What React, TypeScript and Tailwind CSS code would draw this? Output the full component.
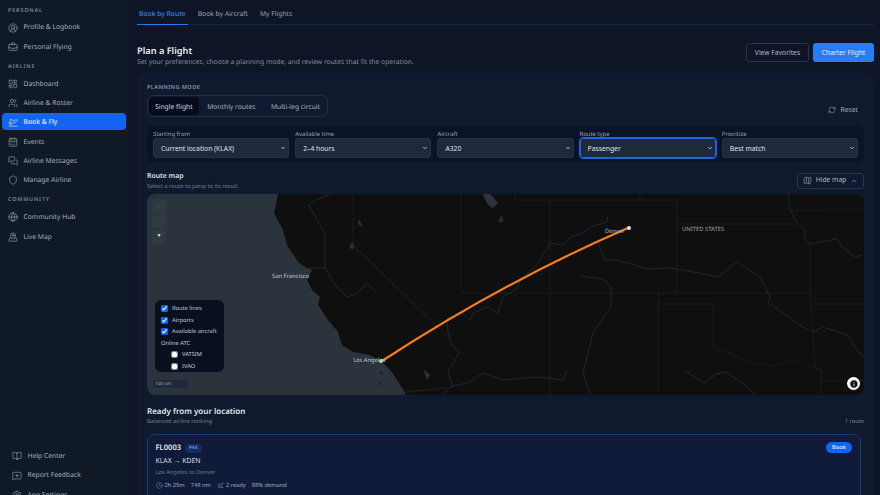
import React from "react";
import {
  CircleUserRound, BriefcaseBusiness, LayoutDashboard, Users, PlaneTakeoff, CalendarDays, MessagesSquare, Shield,
  Globe, MapPinned, BookOpen, MessageSquarePlus, Settings, RefreshCw, Map as MapIcon, ChevronUp, ChevronDown, Clock, Plane, Plus, Minus, Info,
} from "lucide-react";

const Item = ({ icon: I, label, active }: { icon: any; label: string; active?: boolean }) => (
  <div className={`flex items-center gap-[5.5px] h-[17.5px] pl-[6px] pt-[1.5px] rounded-[4px] text-[6.75px] whitespace-nowrap ${active ? "bg-[#1463f3] text-[#e8f0ff] font-medium" : "text-[#a4afbc]"}`}>
    <I size={10} strokeWidth={1.4} />
    <span>{label}</span>
  </div>
);

const Section = ({ children }: { children: string }) => (
  <div className="pl-[8px] text-[5.4px] tracking-[0.16em] text-[#7d8897] font-semibold leading-[8px] uppercase">{children}</div>
);

const Field = ({ label, value, focus }: { label: string; value: string; focus?: boolean }) => (
  <label className="flex-1 min-w-0 flex flex-col">
    <span className="text-[5.9px] leading-[8px] text-[#97a3b3]">{label}</span>
    <span className="relative block">
      <select
        defaultValue={value}
        className={`appearance-none block w-full h-[20px] rounded-[3px] bg-[#1e2a3b] border text-[6.75px] pl-[7px] pt-[1.5px] text-[#dfe5ec] ${focus ? "border-[#1c64d8] outline outline-1 outline-[#1c64d8]" : "border-[#263346]"}`}
      >
        <option>{value}</option>
      </select>
      <ChevronDown size={6} strokeWidth={3} className="absolute right-[3px] top-[7px] text-[#dfe5ec] pointer-events-none" />
    </span>
  </label>
);

const river = "M308 205L310 207L318 222L325 233L325 268L308 268M325 268L335 285L347 297L357 293L367 283L375 292M308 205L316 200L333 193M447 318L463 313L470 320L473 313L487 307L498 313L503 297L518 288L520 280L537 265L550 243L563 245L570 237L583 233L590 227L607 222L608 215M447 318L448 333L452 345L459 353L448 372L452 385L443 395M450 387L470 382L483 373L503 380L537 377L563 380L567 370M598 243L605 260L617 260L648 269L670 268L693 272L718 277L737 262L760 277L770 297L768 303L783 313L803 327L813 332L823 327L847 335L857 350L863 356M580 276L603 279L611 287L611 307L593 333L583 373L590 394M788 193L790 210L797 223L805 230L804 237L810 244L837 239L842 247L855 257L863 255M684 370L704 383L716 374L726 372L745 385L755 395";
const border = "M353 193L353 245M461 193L461 293L811 293M550 200L550 395M515 193L515 200L677 200L677 293M677 224L797 224M790 211L863 209M810 244L810 293L813 330L815 368M659 293L658 304L658 393M658 304L713 304L713 347L726 352L735 356L752 363L765 365L775 366L785 362L800 362L812 368L821 369L821 393M821 381L863 381M812 304L863 304M640 193L640 200";

const MapLabel = ({ className, children }: { className: string; children: string }) => (
  <span className={`absolute text-[5.8px] leading-[8px] whitespace-nowrap ${className}`}>{children}</span>
);

const Check = ({ label, on, className = "" }: { label: string; on?: boolean; className?: string }) => (
  <label className={`flex items-center gap-[4px] h-[11.5px] whitespace-nowrap ${className}`}>
    <input type="checkbox" defaultChecked={on} className="w-[7px] h-[7px] m-0 accent-[#0b63f0]" />
    <span>{label}</span>
  </label>
);

export default function App() {
  return (
    <div className="flex h-[495px] w-[880px] overflow-hidden bg-[#0d1526] text-white [text-rendering:geometricPrecision]" style={{ fontFamily: '"Noto Sans", sans-serif' }}>
      <aside className="w-[128px] shrink-0 h-full bg-[#0f1a26] flex flex-col pt-[6px] overflow-hidden">
        <Section>Personal</Section>
        <div className="flex flex-col gap-[1.8px] px-[2px] mt-[4px]">
          <Item icon={CircleUserRound} label="Profile & Logbook" />
          <Item icon={BriefcaseBusiness} label="Personal Flying" />
        </div>
        <div className="mt-[7.5px]"><Section>Airline</Section></div>
        <div className="flex flex-col gap-[1.8px] px-[2px] mt-[4px]">
          <Item icon={LayoutDashboard} label="Dashboard" />
          <Item icon={Users} label="Airline & Roster" />
          <Item icon={PlaneTakeoff} label="Book & Fly" active />
          <Item icon={CalendarDays} label="Events" />
          <Item icon={MessagesSquare} label="Airline Messages" />
          <Item icon={Shield} label="Manage Airline" />
        </div>
        <div className="mt-[7px]"><Section>Community</Section></div>
        <div className="flex flex-col gap-[2px] px-[2px] mt-[4.5px]">
          <Item icon={Globe} label="Community Hub" />
          <Item icon={MapPinned} label="Live Map" />
        </div>
        <div className="mt-auto flex flex-col gap-[2px] pl-[6px] pr-[2px] translate-y-[8px]">
          <Item icon={BookOpen} label="Help Center" />
          <Item icon={MessageSquarePlus} label="Report Feedback" />
          <Item icon={Settings} label="App Settings" />
        </div>
      </aside>

      <main className="flex-1 min-w-0 h-full overflow-hidden pl-[9px] pr-[6px]">
        <nav className="flex gap-[8px] h-[25px] border-b border-[#18243a] text-[6.75px] text-[#9aa5b4]">
          <span className="h-[25px] pt-[5px] flex items-center border-b border-[#2b78e0] text-[#3b86e6] font-medium px-[2px]">Book by Route</span>
          <span className="flex items-center pt-[5px] px-[2px]">Book by Aircraft</span>
          <span className="flex items-center pt-[5px] px-[2px]">My Flights</span>
        </nav>

        <header className="flex items-start justify-between pt-[18px] h-[48px]">
          <div className="pt-[1.5px]">
            <h1 className="text-[9.2px] leading-[12px] font-semibold text-[#e9edf2]">Plan a Flight</h1>
            <p className="text-[6.75px] leading-[10px] text-[#8490a0]">Set your preferences, choose a planning mode, and review routes that fit the operation.</p>
          </div>
          <div className="flex gap-[4px] text-[6.75px]">
            <button className="w-[63px] h-[19px] pt-[1.5px] rounded-[3px] border border-[#27344a] text-[#aeb8c5]">View Favorites</button>
            <button className="w-[61px] h-[19px] pt-[1.5px] rounded-[3px] bg-[#2a7cf6] text-[#e6f0ff]">Charter Flight</button>
          </div>
        </header>

        <section className="rounded-t-[8px] bg-[#0f1a2e] px-[10px] pt-[10px] h-[430px]">
          <div className="text-[5.7px] leading-[9px] font-semibold tracking-[0.06em] text-[#8994a3]">PLANNING MODE</div>
          <div className="flex items-end justify-between mt-[3px]">
            <div className="flex items-center gap-[1.5px] h-[22px] w-[180.5px] rounded-[6px] border border-[#212e43] px-[1px] text-[6.75px] text-[#aab4c2] whitespace-nowrap">
              <span className="h-[18px] pt-[1.5px] flex items-center px-[6px] rounded-[4px] bg-[#050b1c] text-[#d4dbe5]">Single flight</span>
              <span className="pt-[1.5px] px-[7px]">Monthly routes</span>
              <span className="pt-[1.5px] px-[7px]">Multi-leg circuit</span>
            </div>
            <div className="flex items-center gap-[5px] text-[6.75px] text-[#a8b2bf] pr-[6px] pb-[2px]">
              <RefreshCw size={8} strokeWidth={1.4} />
              <span>Reset</span>
            </div>
          </div>

          <div className="flex gap-[6px] mt-[8px] h-[38px] rounded-[6px] bg-[#0a1328] px-[6px] pt-[5px]">
            <Field label="Starting from" value="Current location (KLAX)" />
            <Field label="Available time" value="2–4 hours" />
            <Field label="Aircraft" value="A320" />
            <Field label="Route type" value="Passenger" focus />
            <Field label="Prioritize" value="Best match" />
          </div>

          <div className="flex items-center justify-between mt-[9px] h-[17px]">
            <div>
              <div className="text-[6.875px] leading-[10px] font-semibold text-[#dbe1e9] pt-[1px]">Route map</div>
              <div className="text-[5.73px] leading-[8px] text-[#77828f]">Select a route to jump to its result.</div>
            </div>
            <button className="w-[67px] h-[16px] rounded-[3px] border border-[#27344a] flex items-center justify-center gap-[4px] text-[6.75px] text-[#aeb8c5]">
              <MapIcon size={9} strokeWidth={1.4} />
              <span>Hide map</span>
              <ChevronUp size={8} strokeWidth={1.6} />
            </button>
          </div>

          <div className="relative mt-[5px] h-[201px] rounded-[8px] overflow-hidden bg-[#0f0f10]">
            <svg viewBox="147 194 717 201" className="absolute inset-0 w-full h-full">
              <path d="M147 194L278 194L274 213L283 230L287 245L298 262L307 268L312 270L307 280L312 290L320 297L318 305L328 320L338 332L342 345L353 352L370 355L382 362L392 372L398 382L405 392L405 395L147 395Z" fill="#2b343c" />
              <path d={river} fill="none" stroke="#222e36" strokeWidth="0.8" />
              <path d={border} fill="none" stroke="#353739" strokeWidth="0.6" strokeDasharray="1 1" />
              <path d="M353 245L448 337M405 392L447 388" fill="none" stroke="#353739" strokeWidth="0.5" />
              <path d="M483 194L490 194L498 203L492 208L487 203Z M359 220L362 226L358 224Z M351 243L354 245L353 249L350 248Z M501 216L503 221L499 222Z M424 370L430 375L427 379Z" fill="#2b343c" stroke="#2b343c" strokeWidth="0.6" />
              <path d="M352 361L355 361M380 372L383 374M379 382L382 385" stroke="#0f0f10" strokeWidth="1" />
              <path d="M382 361Q505 281 628 228" fill="none" stroke="#f67d1c" strokeWidth="2.2" strokeLinecap="round" />
              <circle cx="381" cy="361" r="2" fill="#7df08d" />
              <circle cx="629" cy="228" r="2" fill="#dbe6fa" />
            </svg>

            <MapLabel className="left-[125px] top-[78px] text-[#c9ced3]">San Francisco</MapLabel>
            <MapLabel className="left-[206px] top-[162px] text-[#c9ced3]">Los Angeles</MapLabel>
            <MapLabel className="left-[458px] top-[33px] text-[#aeb5bf]">Denver</MapLabel>
            <MapLabel className="left-[535px] top-[31px] text-[#8b9098] font-medium">UNITED STATES</MapLabel>

            <div className="absolute left-[5px] top-[5px] flex flex-col gap-[1px] text-[#3d4852]">
              <div className="w-[14px] h-[14px] rounded-[2px] bg-[#2f3a42] flex items-center justify-center"><Plus size={7} /></div>
              <div className="w-[14px] h-[14px] rounded-[2px] bg-[#2f3a42] flex items-center justify-center"><Minus size={7} /></div>
              <div className="w-[14px] h-[14px] mt-[1px] rounded-[2px] bg-[#2f3a42] flex items-center justify-center text-[#e6e9ec] text-[5px]">▼</div>
            </div>

            <div className="absolute left-[8px] top-[106px] w-[69px] h-[72px] rounded-[6px] bg-[#081020] px-[6px] pt-[3px] text-[5.73px] text-[#c3cbd6]">
              <Check label="Route lines" on />
              <Check label="Airports" on />
              <Check label="Available aircraft" on />
              <div className="h-[11.5px] flex items-center">Online ATC</div>
              <Check label="VATSIM" className="pl-[10px]" />
              <Check label="IVAO" className="pl-[10px] h-[10px]" />
            </div>

            <div className="absolute left-[5px] top-[185px] w-[37px] h-[10px] bg-[#20293a] border border-[#2c3645] text-[4.6px] leading-[8px] pl-[2px] text-[#aab2bc]">100 nm</div>

            <div className="absolute right-[4px] bottom-[5px] w-[13px] h-[13px] rounded-full bg-white flex items-center justify-center">
              <Info size={10} className="text-white fill-[#111]" strokeWidth={2} />
            </div>
          </div>

          <div className="flex items-end justify-between mt-[11px]">
            <div>
              <div className="text-[8px] leading-[10px] font-semibold text-[#e3e7ec] pt-[0.5px]">Ready from your location</div>
              <div className="text-[5.73px] leading-[8px] text-[#77828f]">Balanced airline ranking</div>
            </div>
            <div className="text-[5.73px] leading-[8px] text-[#7f8a98]">1 route</div>
          </div>

          <article className="relative mt-[9.5px] w-[714px] h-[120px] rounded-t-[8px] border border-[#1d3a70] bg-[#101b3a] pl-[7.5px] pt-[6px]">
            <div className="flex items-center gap-[4px]">
              <span className="text-[7.6px] leading-[14px] font-semibold text-[#e3e8ef]">FL0003</span>
              <span className="px-[4px] h-[9px] rounded-full bg-[#132e66] text-[4.6px] leading-[9px] font-medium text-[#88aef0]">PAX</span>
            </div>
            <div className="text-[6.875px] leading-[10px] pt-[1.5px] text-[#d7dde5]">KLAX → KDEN</div>
            <div className="text-[5.73px] leading-[9px] pt-[1px] text-[#6f7b8c]">Los Angeles to Denver</div>
            <div className="flex items-center gap-[6px] text-[5.73px] leading-[9px] mt-[4px] text-[#a3adba]">
              <span className="flex items-center gap-[2px]"><Clock size={7} strokeWidth={1.3} />2h 25m</span>
              <span>748 nm</span>
              <span className="flex items-center gap-[2px]"><Plane size={7} strokeWidth={1.3} />2 ready</span>
              <span>88% demand</span>
            </div>
            <div className="text-[5.2px] leading-[9px] mt-[3px] text-[#6f7b8c]">A320</div>
            <button className="absolute right-[8px] top-[7px] w-[26px] h-[11px] rounded-full bg-[#1463f3] text-[5.73px] leading-[11px] font-medium text-[#e8f0ff]">Book</button>
          </article>
        </section>
      </main>
    </div>
  );
}
